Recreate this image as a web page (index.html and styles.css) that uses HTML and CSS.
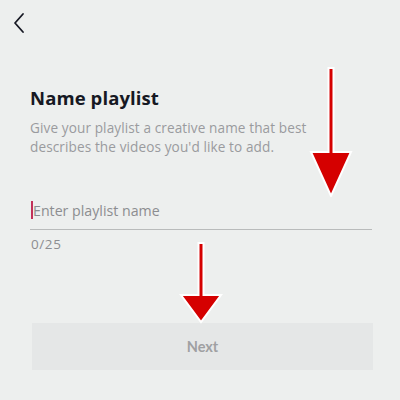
FILE: index.html
```html
<!DOCTYPE html>
<html>
<head>
<meta charset="utf-8">
<link rel="stylesheet" href="styles.css">
</head>
<body>
<div class="screen">
  <header class="topbar">
    <svg class="back" width="14" height="22" viewBox="0 0 14 22"><path d="M11 2 L3 11 L11 20" fill="none" stroke="#161823" stroke-width="1.8" stroke-linecap="round" stroke-linejoin="round"/></svg>
  </header>
  <main class="content">
    <h1 class="title">Name playlist</h1>
    <p class="desc">Give your playlist a creative name that best describes the videos you'd like to add.</p>
    <div class="field">
      <span class="cursor"></span><span class="placeholder">Enter playlist name</span>
    </div>
    <div class="count">0/25</div>
    <button class="next">Next</button>
  </main>
  <svg class="arrow arrow1" width="48" height="130" viewBox="0 0 48 130"><path d="M21.5 1 H26.5 V85 H44 L24 129 L4 85 H21.5 Z" fill="#d50000" stroke="#fff" stroke-width="2" stroke-linejoin="miter"/></svg>
  <svg class="arrow arrow2" width="46" height="82" viewBox="0 0 46 82"><path d="M20.5 1 H25.5 V53 H43 L23 80 L3 53 H20.5 Z" fill="#d50000" stroke="#fff" stroke-width="2" stroke-linejoin="miter"/></svg>
</div>
</body>
</html>
```

FILE: styles.css
```css
* { box-sizing: border-box; }
html, body { margin: 0; padding: 0; }
body { background: #edefee; font-family: "Open Sans", "Liberation Sans", sans-serif; }
.screen { position: relative; width: 400px; height: 400px; overflow: hidden; background: #edefee; }
.topbar { height: 44px; padding: 12px 0 0 12px; }
.back { display: block; }
.content { padding: 42px 28px 0 30px; }
.title { margin: 0; font-size: 18.5px; font-weight: 700; color: #161823; line-height: 24px; letter-spacing: 0.1px; }
.desc { margin: 9px 0 0; max-width: 290px; font-size: 13.6px; line-height: 18.5px; letter-spacing: 0.1px; color: #9a9b9e; }
.field { margin-top: 35px; height: 39px; border-bottom: 1px solid #b9bbbb; display: flex; align-items: center; padding-left: 1px; }
.cursor { width: 2px; height: 18px; background: #c2315a; margin-right: 0; }
.placeholder { font-size: 14.2px; color: #8c8d90; }
.count { margin-top: 5px; font-size: 13.5px; letter-spacing: 0.6px; color: #8c8d90; padding-left: 1px; }
.next { display: block; width: 341px; height: 47px; margin: 70px 0 0 2px; border: none; background: #e5e7e7; color: #9fa0a2; font-family: "Lato", sans-serif; font-size: 14.5px; font-weight: 700; }
.arrow { position: absolute; }
.arrow1 { left: 307px; top: 67px; }
.arrow2 { left: 178px; top: 242px; }
```
